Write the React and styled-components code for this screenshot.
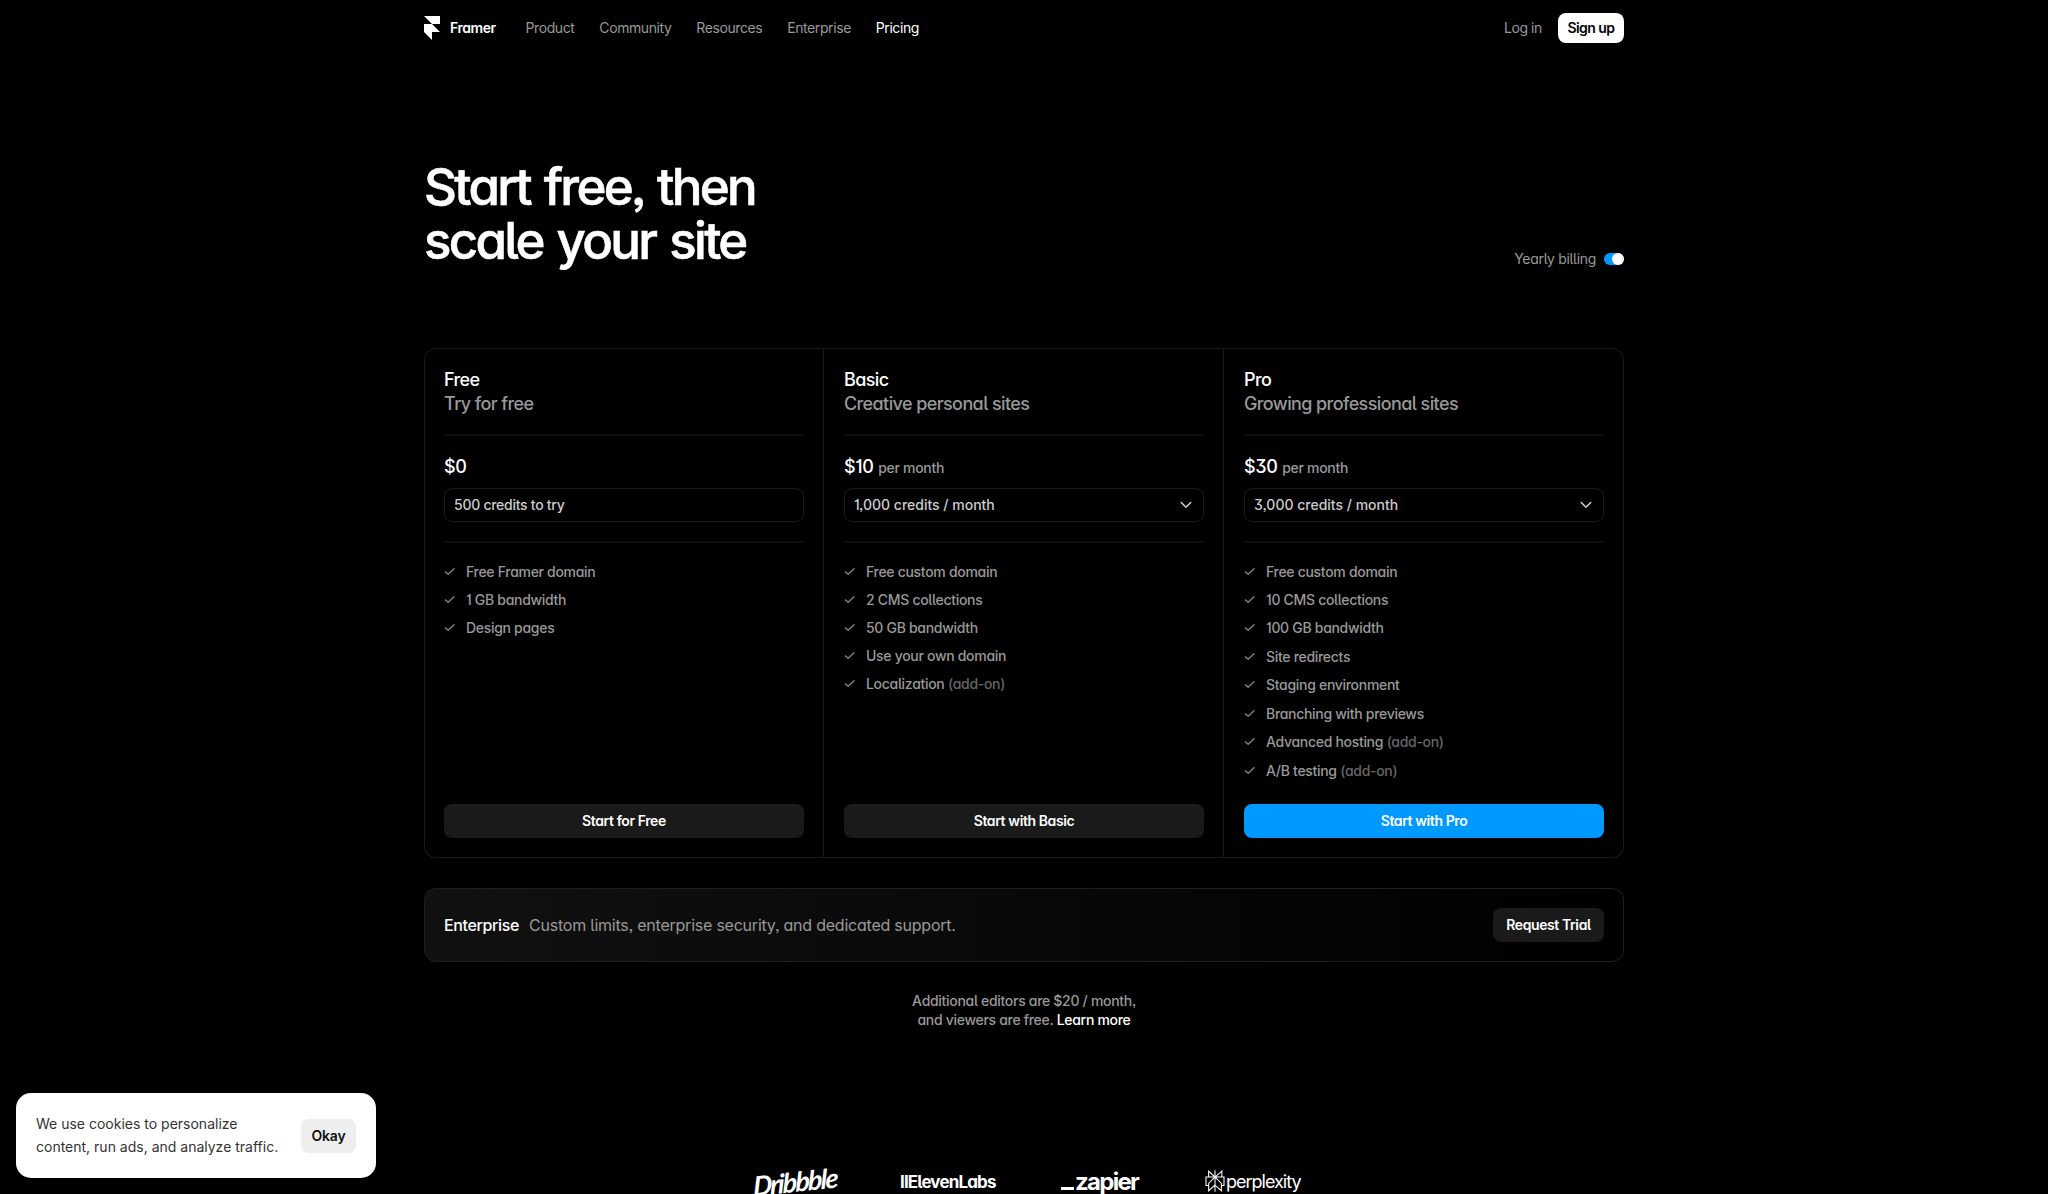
import styled, { createGlobalStyle, css } from 'styled-components';
import { SiPerplexity } from 'react-icons/si';

const GlobalStyle = createGlobalStyle`
  * {
    box-sizing: border-box;
  }

  body {
    margin: 0;
    background: #000;
    color: #fff;
    font-family: Inter, "Liberation Sans", sans-serif;
    font-feature-settings: "cv01", "cv05", "cv09", "cv11", "ss03";
    -webkit-font-smoothing: antialiased;
  }

  h1, h2, p, ul {
    margin: 0;
    padding: 0;
  }
`;

const Page = styled.div`
  height: 1194px;
  overflow: hidden;
`;

const Container = styled.div`
  width: 1200px;
  margin: 0 auto;
`;

const NavBar = styled.nav`
  display: flex;
  align-items: center;
  height: 56px;
`;

const Brand = styled.a`
  display: flex;
  align-items: center;
  gap: 10px;
  width: 101.5px;
  font-size: 14px;
  font-weight: 600;
  letter-spacing: -0.45px;

  span {
    padding-bottom: 1px;
  }
`;

const NavLinks = styled.div`
  display: flex;
  flex: 1;
  gap: 24.8px;
`;

const NavLink = styled.a`
  padding-bottom: 1px;
  font-size: 14px;
  letter-spacing: -0.4px;
  color: ${({ $active }) => ($active ? '#fff' : '#999')};
`;

const Button = styled.button`
  display: flex;
  align-items: center;
  justify-content: center;
  height: 34px;
  padding: 0 0 1px;
  border: none;
  border-radius: 8px;
  font-family: inherit;
  font-feature-settings: inherit;
  font-size: 14px;
  font-weight: 600;
  letter-spacing: -0.4px;
  color: #fff;
  background: #1a1a1a;

  ${({ $primary }) => $primary && css`
    background: #0099ff;
  `}
`;

const SignUpButton = styled(Button)`
  width: 66px;
  height: 30px;
  margin-left: 16px;
  letter-spacing: -0.55px;
  color: #000;
  background: #fff;
`;

const Hero = styled.header`
  display: flex;
  justify-content: space-between;
  align-items: flex-end;
  height: 216px;
`;

const Title = styled.h1`
  padding-bottom: 4px;
  font-size: 51px;
  font-weight: 500;
  line-height: 54px;
  letter-spacing: -2.7px;
  word-spacing: 3px;
  -webkit-text-stroke: 0.6px #fff;
`;

const Billing = styled.div`
  display: flex;
  align-items: center;
  gap: 8px;
  height: 26px;
  font-size: 14px;
  letter-spacing: -0.3px;
  color: #999;

  span {
    padding-bottom: 1px;
  }
`;

const Toggle = styled.div`
  display: flex;
  justify-content: flex-end;
  width: 20px;
  height: 12px;
  border-radius: 6px;
  background: #0099ff;

  &::after {
    content: '';
    width: 12px;
    height: 12px;
    border-radius: 50%;
    background: #fff;
  }
`;

const Plans = styled.section`
  display: grid;
  grid-template-columns: repeat(3, 400px);
  height: 510px;
  margin-top: 76px;
  border-radius: 12px;
  box-shadow: inset 0 0 0 1px #1a1a1a;
`;

const PlanCard = styled.article`
  display: flex;
  flex-direction: column;
  padding: 20px;
  box-shadow: ${({ $last }) => ($last ? 'none' : 'inset -1px 0 0 #1a1a1a')};
`;

const PlanHead = styled.div`
  height: 66px;
  font-size: 18px;
  font-weight: 500;
  line-height: 24px;
  letter-spacing: -0.6px;

  p {
    color: #999;
  }
`;

const Divider = styled.div`
  height: 2px;
  border-radius: 1px;
  background: #0d0d0d;
`;

const Price = styled.div`
  display: flex;
  align-items: baseline;
  gap: 4.5px;
  height: 52px;
  padding-top: 19px;
  font-size: 18px;
  font-weight: 500;
  line-height: 24px;
  letter-spacing: -0.3px;

  span {
    font-size: 14px;
    letter-spacing: -0.3px;
    color: #999;
  }
`;

const Credits = styled.div`
  display: flex;
  align-items: center;
  justify-content: space-between;
  height: 34px;
  margin-bottom: 19px;
  padding: 0 11px 1px 9px;
  border: 1px solid #1a1a1a;
  border-radius: 8px;
  font-size: 14px;
  font-weight: 500;
  letter-spacing: ${({ $fixed }) => ($fixed ? '-0.27px' : '0')};
  color: #ccc;
`;

const FeatureList = styled.ul`
  display: flex;
  flex-direction: column;
  flex: 1;
  gap: ${({ $loose }) => ($loose ? '11.45px' : '11.2px')};
  padding-top: 19.5px;
  list-style: none;
`;

const Feature = styled.li`
  display: flex;
  align-items: center;
  height: 17px;
  font-size: 14px;
  font-weight: 500;
  letter-spacing: -0.3px;
  color: #999;

  svg {
    margin-right: 11px;
  }

  span {
    margin-left: 3.5px;
    color: #666;
  }
`;

const Enterprise = styled.section`
  display: flex;
  align-items: center;
  height: 74px;
  margin-top: 30px;
  padding: 0 19px;
  border: 1px solid #1f1f1f;
  border-radius: 12px;
  background: linear-gradient(90deg, #111 0%, #000 100%);
  font-size: 16px;
`;

const EnterpriseName = styled.h2`
  margin-right: 10px;
  font-size: 16px;
  font-weight: 500;
  letter-spacing: -0.36px;
`;

const EnterpriseText = styled.p`
  flex: 1;
  letter-spacing: -0.23px;
  color: #999;
`;

const TrialButton = styled(Button)`
  width: 111px;
`;

const Footnote = styled.p`
  margin-top: 29px;
  font-size: 14px;
  font-weight: 500;
  line-height: 19px;
  letter-spacing: -0.3px;
  text-align: center;
  color: #999;

  a {
    color: #fff;
  }
`;

const Logos = styled.div`
  display: flex;
  align-items: center;
  height: 40px;
  margin-top: 132px;
  padding-left: 329px;
  white-space: nowrap;
`;

const Dribbble = styled.span`
  width: 147px;
  font-family: Lato, "Open Sans", sans-serif;
  font-size: 27px;
  font-style: italic;
  font-weight: 700;
  letter-spacing: -1.8px;
  transform: rotate(-6deg) skewX(-6deg);
  transform-origin: 40px 50%;
`;

const ElevenLabs = styled.span`
  width: 161px;
  padding-top: 1px;
  font-size: 17px;
  font-weight: 700;
  letter-spacing: -0.85px;
`;

const Zapier = styled.span`
  display: flex;
  align-items: baseline;
  width: 143px;
  font-size: 24px;
  font-weight: 700;
  letter-spacing: -1.7px;
  font-feature-settings: normal;

  &::before {
    content: '';
    width: 13px;
    height: 3px;
    margin-right: 1px;
    background: #fff;
  }
`;

const Perplexity = styled.span`
  display: flex;
  align-items: center;
  font-size: 18px;
  letter-spacing: -1px;
  font-feature-settings: normal;
`;

const CookieBanner = styled.aside`
  position: fixed;
  left: 16px;
  bottom: 16px;
  display: flex;
  align-items: center;
  justify-content: space-between;
  width: 360px;
  height: 85px;
  padding: 0 20px;
  border-radius: 15px;
  background: #fff;
  color: #333;
  font-size: 14px;
  line-height: 22.4px;
  font-feature-settings: normal;
  white-space: nowrap;
`;

const OkayButton = styled(Button)`
  width: 55px;
  padding: 0;
  letter-spacing: -0.2px;
  color: #111;
  background: #eee;
`;

const FramerMark = () => (
  <svg width="16" height="24" viewBox="0 0 16 24" fill="#fff">
    <path d="M0 0h16v8H8zM0 8h8l8 8H8v8l-8-8z" />
  </svg>
);

const CheckIcon = () => (
  <svg width="11" height="9" viewBox="0 0 11 9" fill="none" stroke="#808080" strokeWidth="1.4" strokeLinecap="round" strokeLinejoin="round">
    <path d="M1.4 4.9 4.2 7.3 10 1.7" />
  </svg>
);

const ChevronIcon = () => (
  <svg width="12" height="8" viewBox="0 0 12 8" fill="none" stroke="#ccc" strokeWidth="1.6" strokeLinecap="round" strokeLinejoin="round">
    <path d="M1.3 1.5 6 6.2l4.7-4.7" />
  </svg>
);

const links = ['Product', 'Community', 'Resources', 'Enterprise', 'Pricing'];

const plans = [
  {
    name: 'Free',
    tagline: 'Try for free',
    price: '$0',
    credits: '500 credits to try',
    features: [['Free Framer domain'], ['1 GB bandwidth'], ['Design pages']],
    action: 'Start for Free',
  },
  {
    name: 'Basic',
    tagline: 'Creative personal sites',
    price: '$10',
    credits: '1,000 credits / month',
    features: [
      ['Free custom domain'],
      ['2 CMS collections'],
      ['50 GB bandwidth'],
      ['Use your own domain'],
      ['Localization', '(add-on)'],
    ],
    action: 'Start with Basic',
  },
  {
    name: 'Pro',
    tagline: 'Growing professional sites',
    price: '$30',
    credits: '3,000 credits / month',
    features: [
      ['Free custom domain'],
      ['10 CMS collections'],
      ['100 GB bandwidth'],
      ['Site redirects'],
      ['Staging environment'],
      ['Branching with previews'],
      ['Advanced hosting', '(add-on)'],
      ['A/B testing', '(add-on)'],
    ],
    action: 'Start with Pro',
  },
];

const Plan = ({ plan, last }) => {
  const isFree = plan.price === '$0';

  return (
    <PlanCard $last={last}>
      <PlanHead>
        <div>{plan.name}</div>
        <p>{plan.tagline}</p>
      </PlanHead>
      <Divider />
      <Price>
        {plan.price}
        {!isFree && <span>per month</span>}
      </Price>
      <Credits $fixed={isFree}>
        {plan.credits}
        {!isFree && <ChevronIcon />}
      </Credits>
      <Divider />
      <FeatureList $loose={last}>
        {plan.features.map(([label, note]) => (
          <Feature key={label}>
            <CheckIcon />
            {label}
            {note && <span>{note}</span>}
          </Feature>
        ))}
      </FeatureList>
      <Button $primary={last}>{plan.action}</Button>
    </PlanCard>
  );
};

const App = () => {
  return (
    <Page>
      <GlobalStyle />
      <Container>
        <NavBar>
          <Brand>
            <FramerMark />
            <span>Framer</span>
          </Brand>
          <NavLinks>
            {links.map((link) => (
              <NavLink key={link} $active={link === 'Pricing'}>{link}</NavLink>
            ))}
          </NavLinks>
          <NavLink>Log in</NavLink>
          <SignUpButton>Sign up</SignUpButton>
        </NavBar>
        <Hero>
          <Title>
            Start free, then
            <br />
            scale your site
          </Title>
          <Billing>
            <span>Yearly billing</span>
            <Toggle />
          </Billing>
        </Hero>
        <Plans>
          {plans.map((plan, index) => (
            <Plan key={plan.name} plan={plan} last={index === plans.length - 1} />
          ))}
        </Plans>
        <Enterprise>
          <EnterpriseName>Enterprise</EnterpriseName>
          <EnterpriseText>Custom limits, enterprise security, and dedicated support.</EnterpriseText>
          <TrialButton>Request Trial</TrialButton>
        </Enterprise>
        <Footnote>
          Additional editors are $20 / month,
          <br />
          and viewers are free. <a>Learn more</a>
        </Footnote>
        <Logos>
          <Dribbble>Dribbble</Dribbble>
          <ElevenLabs>IIElevenLabs</ElevenLabs>
          <Zapier>zapier</Zapier>
          <Perplexity>
            <SiPerplexity size={22} />
            perplexity
          </Perplexity>
        </Logos>
      </Container>
      <CookieBanner>
        <p>
          We use cookies to personalize
          <br />
          content, run ads, and analyze traffic.
        </p>
        <OkayButton>Okay</OkayButton>
      </CookieBanner>
    </Page>
  );
};

export default App;
